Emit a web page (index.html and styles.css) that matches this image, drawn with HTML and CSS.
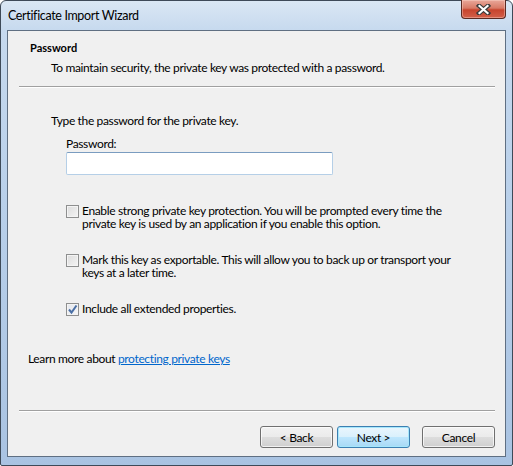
FILE: index.html
```html
<!DOCTYPE html>
<html>
<head>
<meta charset="utf-8">
<link rel="stylesheet" href="styles.css">
</head>
<body>
<div class="window">
  <div class="titlebar">
    <span class="title">Certificate Import Wizard</span>
    <div class="close">
      <svg width="17" height="11" viewBox="0 0 17 11"><path d="M4 1.8 L13 9.2 M13 1.8 L4 9.2" fill="none" stroke="#3a3a3a" stroke-width="4.4" stroke-linecap="square"/><path d="M4.5 2 L12.5 9 M12.5 2 L4.5 9" fill="none" stroke="#fff" stroke-width="2.2" stroke-linecap="square"/></svg>
    </div>
  </div>
  <div class="client">
    <div class="header">
      <div class="h-title">Password</div>
      <div class="h-desc">To maintain security, the private key was protected with a password.</div>
    </div>
    <div class="sep"></div>
    <div class="body">
      <div class="intro">Type the password for the private key.</div>
      <div class="field">
        <div class="label">Password:</div>
        <div class="input"></div>
      </div>
      <div class="check first">
        <span class="box"></span>
        <span class="ctext">Enable strong private key protection. You will be prompted every time the private key is used by an application if you enable this option.</span>
      </div>
      <div class="check">
        <span class="box"></span>
        <span class="ctext">Mark this key as exportable. This will allow you to back up or transport your keys at a later time.</span>
      </div>
      <div class="check single">
        <span class="box checked"><svg width="11" height="11" viewBox="0 0 11 11"><path d="M2 5.5 L4.5 8.5 L9.5 1.5" fill="none" stroke="#4a6fa5" stroke-width="2"/></svg></span>
        <span class="ctext">Include all extended properties.</span>
      </div>
      <div class="learn">Learn more about <a class="link">protecting private keys</a></div>
    </div>
    <div class="sep"></div>
    <div class="footer">
      <div class="btn">&lt; Back</div>
      <div class="btn default">Next &gt;</div>
      <div class="btn cancel">Cancel</div>
    </div>
  </div>
</div>
</body>
</html>
```
FILE: styles.css
```css
html, body {
  margin: 0;
  padding: 0;
  background: #ffffff;
}
.window {
  width: 513px;
  height: 466px;
  box-sizing: border-box;
  border: 1px solid #3e4a58;
  border-radius: 6px 6px 2px 2px;
  background: linear-gradient(180deg, #dae7f4 0px, #c6d9ee 30px, #b9d0ea 200px, #a9c3e2 466px);
  display: flex;
  flex-direction: column;
  font-family: Lato, "Noto Sans", sans-serif;
  font-size: 12px;
  letter-spacing: -0.35px;
  color: #000;
}
.titlebar {
  height: 29px;
  display: flex;
  justify-content: space-between;
  align-items: flex-start;
  flex-shrink: 0;
}
.title {
  margin: 7px 0 0 7px;
  font-size: 12.5px;
  line-height: 15px;
  color: #000;
}
.close {
  width: 43px;
  height: 18px;
  margin-right: 6px;
  margin-top: -1px;
  border: 1px solid #5a2a22;
  border-top: none;
  border-radius: 0 0 4px 4px;
  background: linear-gradient(180deg, #e9a89a 0%, #d87a66 45%, #c7442d 55%, #d3604a 100%);
  display: flex;
  align-items: center;
  justify-content: center;
  box-shadow: inset 0 0 0 1px rgba(255,220,210,0.4);
}
.client {
  margin: 0 6px 8px 6px;
  border: 1px solid #5f6f82;
  background: #f0f0f0;
  flex: 1;
  display: flex;
  flex-direction: column;
}
.header {
  padding: 9px 0 0 22px;
  height: 46px;
}
.h-title {
  font-weight: bold;
  font-size: 11px;
  letter-spacing: 0;
  line-height: 15px;
}
.h-desc {
  margin: 5px 0 0 21px;
  line-height: 15px;
}
.sep {
  height: 1px;
  background: #a0a0a0;
  border-bottom: 1px solid #ffffff;
  margin: 0 10px 0 11px;
}
.body {
  flex: 1;
  padding: 0 0 0 20px;
}
.intro {
  margin: 25px 0 0 23px;
  line-height: 15px;
}
.field {
  margin: 8px 0 0 38px;
}
.label {
  line-height: 15px;
}
.input {
  margin-top: 1px;
  width: 265px;
  height: 21px;
  border: 1px solid #abadb3;
  border-color: #7a9cc0 #b5cfe7 #b5cfe7 #b5cfe7;
  border-radius: 2px;
  background: #fff;
}
.check {
  display: flex;
  align-items: flex-start;
  gap: 3px;
  margin: 23px 0 0 38px;
  width: 386px;
}
.check.first {
  margin-top: 29px;
}
.check.single {
  margin-top: 23px;
}
.box {
  width: 11px;
  height: 11px;
  flex-shrink: 0;
  margin-top: 1px;
  border: 1px solid #8e8f8f;
  background: linear-gradient(135deg, #dcdcdc 0%, #f4f4f4 100%);
  box-shadow: inset 0 0 0 1px #f4f4f4;
  display: flex;
  align-items: center;
  justify-content: center;
}
.box.checked {
  background: linear-gradient(135deg, #e4e7ee 0%, #f6f6f6 100%);
}
.ctext {
  line-height: 13px;
}
.learn {
  margin: 35px 0 0 0;
  line-height: 15px;
}
.link {
  color: #0066cc;
  text-decoration: underline;
}
.footer {
  display: flex;
  justify-content: flex-end;
  padding: 14px 10px 8px 0;
  gap: 4px;
}
.btn {
  width: 71px;
  height: 20px;
  border: 1px solid #707070;
  border-radius: 3px;
  background: linear-gradient(180deg, #f2f2f2 0%, #ebebeb 50%, #dddddd 51%, #cfcfcf 100%);
  box-shadow: inset 0 0 0 1px rgba(255,255,255,0.7);
  display: flex;
  align-items: center;
  justify-content: center;
  line-height: 15px;
}
.btn.default {
  border-color: #3c7fb1;
  background: linear-gradient(180deg, #eaf6fd 0%, #d9f0fc 50%, #bee6fd 51%, #a7d9f5 100%);
  box-shadow: inset 0 0 0 1px #a6e7fc;
}
.btn.cancel {
  margin-left: 8px;
}
```
